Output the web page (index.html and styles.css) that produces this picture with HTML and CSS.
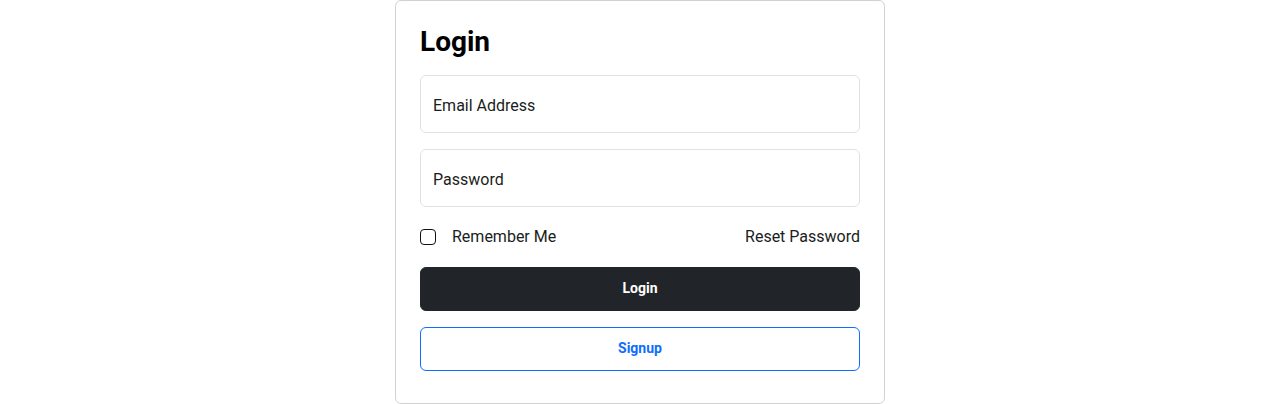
FILE: index.html
```html
<!DOCTYPE html>
<html lang="en">
<head>
<meta charset="utf-8">
<title>Login</title>
<link rel="stylesheet" href="styles.css">
</head>
<body>
<main class="card">
  <h1 class="title">Login</h1>
  <form class="form">
    <input class="field" type="email" placeholder="Email Address">
    <input class="field" type="password" placeholder="Password">
    <div class="row">
      <label class="check">
        <input class="check-box" type="checkbox">
        <span>Remember Me</span>
      </label>
      <a class="reset" href="#">Reset Password</a>
    </div>
    <button class="btn btn-dark" type="button">Login</button>
    <button class="btn btn-outline" type="button">Signup</button>
  </form>
</main>
</body>
</html>
```
FILE: styles.css
```css
* { box-sizing: border-box; }
html, body { margin: 0; padding: 0; background: #fff; }
body {
  font-family: Roboto, "Liberation Sans", sans-serif;
  font-size: 16px;
  line-height: 1.5;
  color: #212529;
}
.card {
  width: 490px;
  height: 404px;
  margin: 0 auto;
  border: 1px solid #d2d2d2;
  border-radius: 6px;
  padding: 24px;
}
.title {
  margin: 0 0 16px;
  font-size: 28px;
  line-height: 33.6px;
  font-weight: 700;
  color: #000;
}
.form {
  display: flex;
  flex-direction: column;
}
.field {
  height: 58px;
  margin: 0 0 16px;
  padding: 4px 12px 0;
  border: 1px solid #dee2e6;
  border-radius: 6px;
  font-family: inherit;
  font-size: 16px;
  color: #212529;
  background: #fff;
  outline: none;
}
.field::placeholder { color: #1a1d20; opacity: 1; }
.row {
  display: flex;
  justify-content: space-between;
  align-items: center;
  height: 24px;
  margin: 2px 0 18px;
  color: #1a1d20;
}
.check {
  display: flex;
  align-items: center;
  gap: 16px;
}
.check-box {
  appearance: none;
  -webkit-appearance: none;
  width: 16px;
  height: 16px;
  margin: 0;
  border: 1px solid #111;
  border-radius: 4px;
  background: #fff;
}
.reset {
  color: inherit;
  text-decoration: none;
}
.btn {
  height: 44px;
  padding: 0 0 2px;
  border-radius: 6px;
  font-family: inherit;
  font-size: 14px;
  font-weight: 700;
  cursor: pointer;
}
.btn-dark {
  background: #212529;
  border: 1px solid #212529;
  color: #fff;
  margin-bottom: 16px;
}
.btn-outline {
  background: #fff;
  border: 1px solid #0d6efd;
  color: #0d6efd;
}
```
